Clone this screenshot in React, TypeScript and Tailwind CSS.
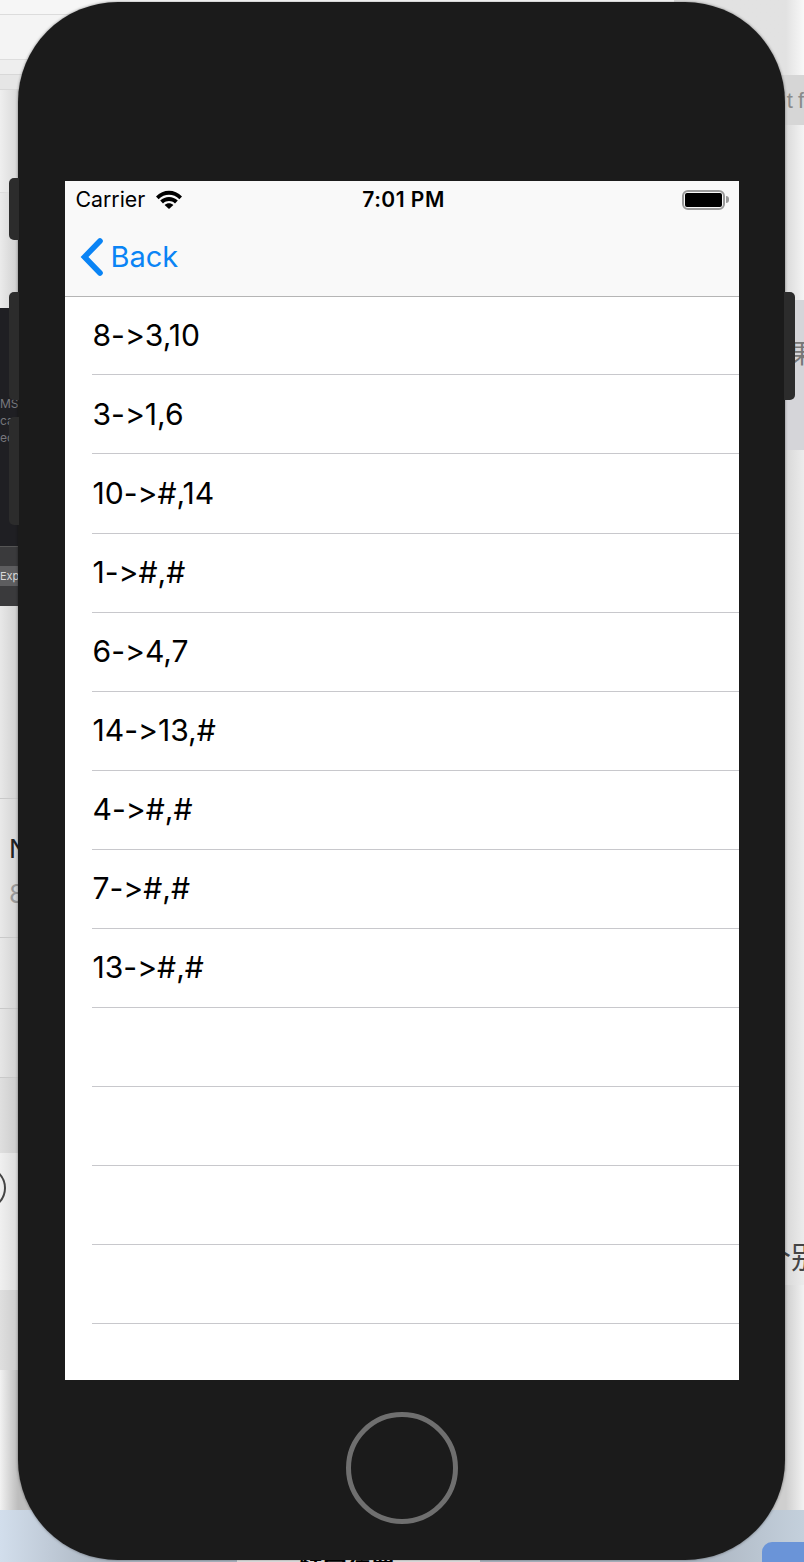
import React from "react";

const rows = ["8->3,10","3->1,6","10->#,14","1->#,#","6->4,7","14->13,#","4->#,#","7->#,#","13->#,#","","","",""];

function Wifi() {
  return (
    <svg width="26" height="19" viewBox="0 0 26 19" className="ml-[11px]">
      <path d="M0 6.4C7.2 -1.2 18.8 -1.2 26 6.4L23.4 9.2C17.6 3.4 8.4 3.4 2.6 9.2Z" fill="#000" />
      <path d="M4.2 10.6C9.2 5.8 16.8 5.8 21.8 10.6L19 13.4C15.4 10.2 10.6 10.2 7 13.4Z" fill="#000" />
      <path d="M8.6 15C11.2 12.6 14.8 12.6 17.4 15L13 19Z" fill="#000" />
    </svg>
  );
}

function Battery() {
  return (
    <div className="flex items-center">
      <div className="flex h-[20px] w-[43px] items-center justify-center rounded-[6px] border-2 border-[#9a9a9a]">
        <div className="h-[14px] w-[37px] rounded-[2px] bg-black" />
      </div>
      <div className="ml-[1px] h-[7px] w-[3px] rounded-r-[3px] bg-[#9a9a9a]" />
    </div>
  );
}

function Chevron() {
  return (
    <svg width="24" height="40" viewBox="0 0 24 40">
      <path d="M20 4 L4.5 20 L20 36" fill="none" stroke="#0a84f5" strokeWidth="5.6" strokeLinecap="round" strokeLinejoin="miter" />
    </svg>
  );
}

export default function App() {
  return (
    <div className="relative flex h-[1562px] w-[804px] flex-col overflow-hidden bg-white font-['Inter',sans-serif] [font-feature-settings:'calt'_0,'liga'_0]">
      {/* desktop behind the simulator */}
      <div className="flex h-[1510px] justify-between">
        <div className="flex w-[130px] flex-col text-[#666]">
          <div className="h-[15px] border-b border-[#dcdcdc] bg-[#f6f6f6]" />
          <div className="h-[45px] border-b border-[#dddddd] bg-[#f4f4f4]" />
          <div className="h-[15px] border-b border-[#d8d8d8] bg-[#eeeeee]" />
          <div className="h-[15px] border-b border-[#d8d8d8] bg-[#e6e6e6]" />
          <div className="h-[103px] border-b border-[#dddddd] bg-gradient-to-r from-[#efefef] to-[#d8d8d8] to-[14%]" />
          <div className="h-[115px] bg-gradient-to-r from-[#ebebeb] to-[#cfcfcf] to-[14%]" />
          <div className="flex h-[238px] flex-col justify-start bg-[#1f1f23] pt-[87px] text-[12px] leading-[17px] text-[#77777c]">
            <span>MS</span>
            <span>ca</span>
            <span>ec</span>
          </div>
          <div className="h-[20px] border-t border-[#555] bg-[#3a3a3c]" />
          <div className="flex h-[20px] items-center bg-[#5d5d5f] text-[11px] text-[#d8d8d8]">Exp</div>
          <div className="h-[20px] bg-[#3a3a3c]" />
          <div className="h-[192px] bg-gradient-to-r from-[#e8e8e8] to-[#cfcfcf] to-[14%]" />
          <div className="h-[139px] border-t border-[#c9c9c9] bg-gradient-to-r from-[#e9e9e9] to-[#d2d2d2] to-[14%] pl-[9px] pt-[27px] text-[26px] leading-[45px]">
            <div className="text-[#222]">N</div>
            <div className="text-[#999]">8</div>
          </div>
          <div className="h-[71px] border-t border-[#c9c9c9] bg-gradient-to-r from-[#e8e8e8] to-[#d2d2d2] to-[14%]" />
          <div className="h-[69px] border-t border-[#c9c9c9] bg-gradient-to-r from-[#e6e6e6] to-[#d0d0d0] to-[14%]" />
          <div className="h-[76px] border-t border-[#c9c9c9] bg-gradient-to-r from-[#dfdfdf] to-[#cbcbcb] to-[14%]" />
          <div className="relative h-[137px] overflow-hidden bg-gradient-to-r from-[#f0f0f0] to-[#dcdcdc] to-[14%]">
            <div className="absolute left-[-38px] top-[13px] h-[44px] w-[44px] rounded-full border-2 border-[#444]" />
          </div>
          <div className="h-[80px] bg-gradient-to-r from-[#dfdfdf] to-[#cccccc] to-[14%]" />
          <div className="flex-1 bg-gradient-to-r from-[#f2f2f2] to-[#bdbdbd] to-[14%]" />
        </div>
        <div className="flex w-[130px] flex-col text-[#8a8a8a]">
          <div className="h-[75px] bg-gradient-to-l from-[#f8f8f8] to-[#e2e2e2] to-[14%]" />
          <div className="flex h-[50px] items-center justify-end gap-[5px] bg-[#d6d6d6] font-['Liberation_Sans',sans-serif] text-[22px]">
            <span>t</span>
            <span>f</span>
          </div>
          <div className="h-[175px] bg-gradient-to-l from-[#f4f4f4] to-[#dadada] to-[14%]" />
          <div className="flex h-[150px] items-center justify-end overflow-hidden bg-[#d5d5d9] pb-[48px] font-['Noto_Sans_CJK_SC',sans-serif] text-[26px] text-[#777]">
            <span className="mr-[-11px]">果</span>
          </div>
          <div className="h-[775px] bg-gradient-to-l from-[#ececec] to-[#d8d8d8] to-[14%]" />
          <div className="flex h-[60px] items-center justify-end overflow-hidden bg-gradient-to-l from-[#ececec] to-[#d8d8d8] to-[14%] font-['Noto_Sans_CJK_SC',sans-serif] text-[30px] text-[#444]">
            <span className="mr-[-17px] whitespace-nowrap">个别</span>
          </div>
          <div className="flex-1 bg-gradient-to-l from-[#f2f2f2] to-[#cfcfcf] to-[14%]" />
        </div>
      </div>
      <div className="flex flex-1 items-end bg-[linear-gradient(90deg,#d2deec_0%,#aeb8c4_12%,#aeb8c4_88%,#c4d0dc_100%)]">
        <div className="ml-[237px] h-[2px] w-[243px] overflow-hidden bg-[#e6e6e6] font-['Noto_Sans_CJK_SC',sans-serif] text-[24px] font-bold leading-[24px] text-black">
          <div className="-mt-[5px] pl-[62px] whitespace-nowrap">特定位置</div>
        </div>
        <div className="absolute bottom-0 right-0 h-[20px] w-[42px] rounded-tl-[10px] bg-[#6a94d8]" />
      </div>

      {/* simulator */}
      <div className="absolute left-[18px] top-[2px] flex h-[1558px] w-[767px] flex-col items-center rounded-[100px] bg-[#1b1b1b] pt-[179px] shadow-[0_0_3px_rgba(0,0,0,0.45)]">
        <div className="flex h-[1199px] w-[674px] flex-col overflow-hidden bg-white text-black">
          <div className="flex h-[116px] shrink-0 flex-col border-b border-[#b5b5b5] bg-[#f9f9f9]">
            <div className="flex h-[37px] items-center justify-between pl-[11px] pr-[10px]">
              <div className="flex w-[200px] items-center text-[21.3px]">
                <span>Carrier</span>
                <Wifi />
              </div>
              <span className="ml-[3px] text-[21px] font-semibold tracking-[0.5px]">7:01 PM</span>
              <div className="flex w-[200px] justify-end">
                <Battery />
              </div>
            </div>
            <div className="flex flex-1 items-center pl-[15px] text-[29px] text-[#0a84f5]">
              <Chevron />
              <span className="ml-[7px]">Back</span>
            </div>
          </div>
          <div className="-mt-[0.7px] flex flex-col">
            {rows.map((r, i) => (
              <div key={i} className="ml-[27px] flex h-[79.08px] shrink-0 items-center border-b border-[#c8c8cc] pl-[1px] text-[30.1px]">
                {r}
              </div>
            ))}
          </div>
        </div>
        <div className="flex flex-1 items-center justify-center pb-[4px]">
          <div className="h-[112px] w-[112px] rounded-full border-[5px] border-[#6f6f6f]" />
        </div>
        <div className="absolute left-[-9px] top-[176px] h-[62px] w-[10px] rounded-l-[5px] bg-[#2c2c2c]" />
        <div className="absolute left-[-9px] top-[290px] h-[108px] w-[10px] rounded-l-[5px] bg-[#2c2c2c]" />
        <div className="absolute left-[-9px] top-[415px] h-[108px] w-[10px] rounded-l-[5px] bg-[#2c2c2c]" />
        <div className="absolute right-[-10px] top-[290px] h-[108px] w-[11px] rounded-r-[5px] bg-[#2c2c2c]" />
      </div>
    </div>
  );
}
